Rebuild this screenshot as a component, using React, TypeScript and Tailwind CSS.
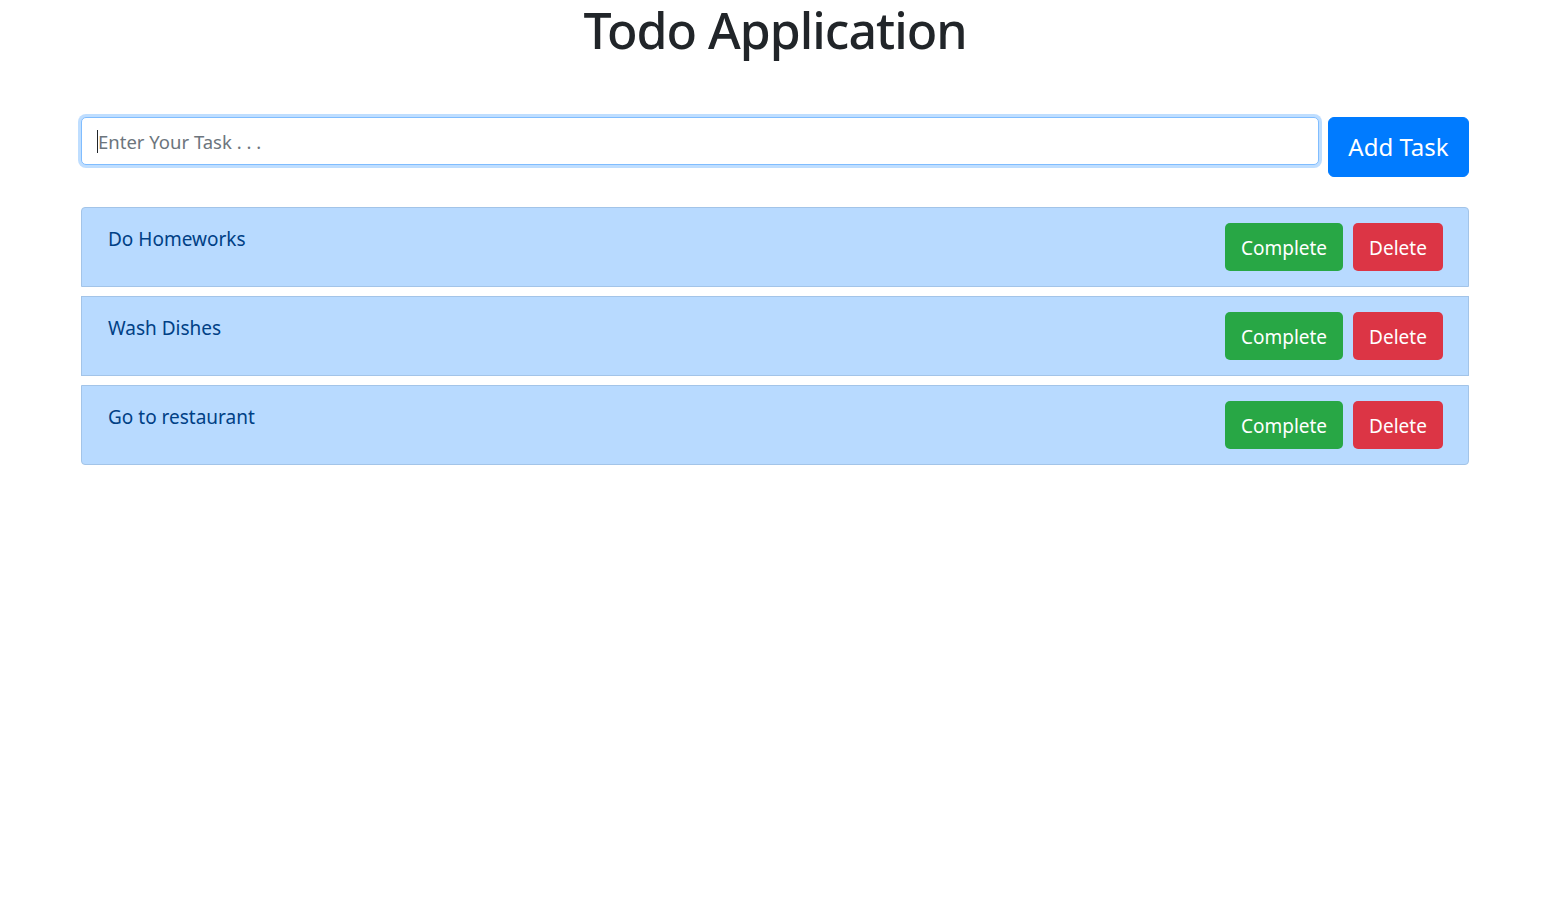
import React from "react";

const tasks = ["Do Homeworks", "Wash Dishes", "Go to restaurant"];

export default function App() {
  return (
    <div
      className="min-h-[916px] bg-white pl-[81px] pr-[85px] text-[#212529]"
      style={{ fontFamily: '"Noto Sans", "Open Sans", sans-serif' }}
    >
      <h1 className="m-0 text-center text-[50px] font-medium leading-[60px] tracking-[-1px] text-[#212529]">
        Todo Application
      </h1>
      <div className="mt-[57px] flex items-start gap-[9px]">
        <div className="relative flex-1">
          <input
            placeholder="Enter Your Task . . ."
            className="h-[48px] w-full rounded-[5px] border border-[#80bdff] bg-white px-[16px] text-[18.5px] text-[#495057] caret-transparent outline-none shadow-[0_0_0_3px_rgba(0,123,255,0.25)] placeholder:text-[#6c757d]"
          />
          <span className="pointer-events-none absolute left-[16px] top-[13px] h-[23px] w-px bg-[#212529]" />
        </div>
        <button className="h-[60px] w-[141px] rounded-[6px] border border-[#007bff] bg-[#007bff] text-[24px] leading-none text-white">
          Add Task
        </button>
      </div>
      <ul className="mt-[30px] flex flex-col gap-[9px]">
        {tasks.map((t, i) => (
          <li
            key={t}
            className={
              "flex h-[80px] items-start justify-between border border-[#a3c4e8] bg-[#b8daff] py-[15px] pl-[26px] pr-[25px] text-[#004085] " +
              (i === 0 ? "rounded-t-[4px] " : "") +
              (i === tasks.length - 1 ? "rounded-b-[4px]" : "")
            }
          >
            <span className="mt-[1px] text-[19px] leading-[30px]">{t}</span>
            <div className="flex gap-[10px]">
              <button className="h-[48px] w-[118px] rounded-[5px] bg-[#28a745] pt-[2px] text-[19px] text-white">
                Complete
              </button>
              <button className="h-[48px] w-[90px] rounded-[5px] bg-[#dc3545] pt-[2px] text-[19px] text-white">
                Delete
              </button>
            </div>
          </li>
        ))}
      </ul>
    </div>
  );
}
